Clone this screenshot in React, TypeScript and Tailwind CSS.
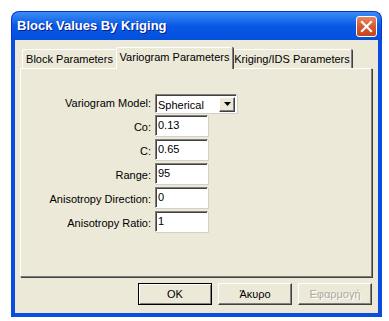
import React from 'react';

const font = { fontFamily: '"Liberation Sans", Arial, sans-serif' };

const fieldClasses =
  "bg-white border border-t-[#7f7f7f] border-l-[#7f7f7f] border-b-white border-r-white shadow-[inset_1px_1px_0_#404040,1px_1px_0_#d4d0c8] text-[11px] leading-[14px] text-black px-[2px] pt-[2px]";

const rows = [
  { label: 'Co:', value: '0.13' },
  { label: 'C:', value: '0.65' },
  { label: 'Range:', value: '95' },
  { label: 'Anisotropy Direction:', value: '0' },
  { label: 'Anisotropy Ratio:', value: '1' },
];

const CloseButton = () => (
  <div className="w-[21px] h-[21px] rounded-[3px] border border-white bg-gradient-to-b from-[#e9865f] via-[#d55a31] to-[#c4431c] flex items-center justify-center">
    <svg width="13" height="13" viewBox="0 0 13 13">
      <path d="M2 2 L11 11 M11 2 L2 11" stroke="white" strokeWidth="2.2" strokeLinecap="square" />
    </svg>
  </div>
);

const Tab = ({ label, active, width }: { label: string; active?: boolean; width: string }) => (
  <div
    className={`${width} ${active ? 'h-[22px] -mx-[1px] z-10 border-b-0 bg-[#ece9d8] -mb-[1px]' : 'h-[19px]'} border-t border-l border-white border-r border-r-[#7f7f7f] shadow-[1px_0_0_#404040] rounded-t-[2px] flex items-center justify-center text-[11px] text-black leading-none`}
  >
    <span className={active ? 'pb-[3px]' : 'pt-[1px]'}>{label}</span>
  </div>
);

const Button = ({ label, kind }: { label: string; kind?: 'default' | 'disabled' }) => (
  <div
    className={`w-[74px] h-[22px] flex items-center justify-center text-[11px] ${
      kind === 'default'
        ? 'border border-black shadow-[inset_1px_1px_0_#fff,inset_-1px_-1px_0_#808080]'
        : 'border border-t-white border-l-white border-b-[#404040] border-r-[#404040] shadow-[inset_-1px_-1px_0_#808080]'
    } ${kind === 'disabled' ? 'text-[#aca899] [text-shadow:1px_1px_0_#fff]' : 'text-black'}`}
  >
    {label}
  </div>
);

export default function App() {
  return (
    <div className="w-[389px] h-[321px] bg-white pt-[11px] pl-[11px]" style={font}>
      <div className="w-[371px] h-[306px] flex flex-col">
        {/* title bar */}
        <div className="h-[29px] rounded-t-[8px] bg-gradient-to-b from-[#3b8cf5] via-[#0858e6] to-[#0350dc] border border-b-0 border-[#0831d9] flex items-center justify-between pl-[5px] pr-[4px]">
          <span className="text-white font-bold text-[13px] [text-shadow:1px_1px_0_#0a1e8a]">Block Values By Kriging</span>
          <CloseButton />
        </div>

        {/* body */}
        <div className="flex-1 bg-[#ece9d8] border-x-4 border-b-4 border-[#0a4de0] flex flex-col pl-[5px] pr-[6px] pt-[7px] pb-[8px]">
          {/* tabs */}
          <div className="flex items-end h-[21px] pl-[2px]">
            <Tab label="Block Parameters" width="w-[95px]" />
            <Tab label="Variogram Parameters" width="w-[117px]" active />
            <Tab label="Kriging/IDS Parameters" width="w-[120px]" />
          </div>

          {/* panel */}
          <div className="h-[209px] border border-t-white border-l-white border-r-[#7f7f7f] border-b-[#7f7f7f] shadow-[1px_1px_0_#404040] flex flex-col pt-[24px]">
            <div className="flex items-center h-[20px]">
              <div className="w-[134px] pr-[4px] text-right text-[11px] text-black">Variogram Model:</div>
              <div className={`${fieldClasses} w-[82px] h-[19px] flex items-start justify-between pr-[1px] pt-[1px]`}>
                <span className="pt-[1px]">Spherical</span>
                <div className="w-[16px] h-[15px] bg-[#ece9d8] border border-t-white border-l-white border-b-[#404040] border-r-[#404040] shadow-[inset_-1px_-1px_0_#808080] flex items-center justify-center">
                  <svg width="7" height="4" viewBox="0 0 7 4">
                    <path d="M0 0 H7 L3.5 4 Z" fill="black" />
                  </svg>
                </div>
              </div>
            </div>
            <div className="flex flex-col gap-[3px] mt-[2px]">
              {rows.map(r => (
                <div key={r.label} className="flex items-center h-[21px]">
                  <div className="w-[134px] pr-[4px] pt-[3px] text-right text-[11px] text-black">{r.label}</div>
                  <div className={`${fieldClasses} w-[53px] h-[21px]`}>{r.value}</div>
                </div>
              ))}
            </div>
          </div>

          {/* buttons */}
          <div className="flex justify-end gap-[6px] mt-[6px]">
            <Button label="OK" kind="default" />
            <Button label="Άκυρο" />
            <Button label="Εφαρμογή" kind="disabled" />
          </div>
        </div>
      </div>
    </div>
  );
}
